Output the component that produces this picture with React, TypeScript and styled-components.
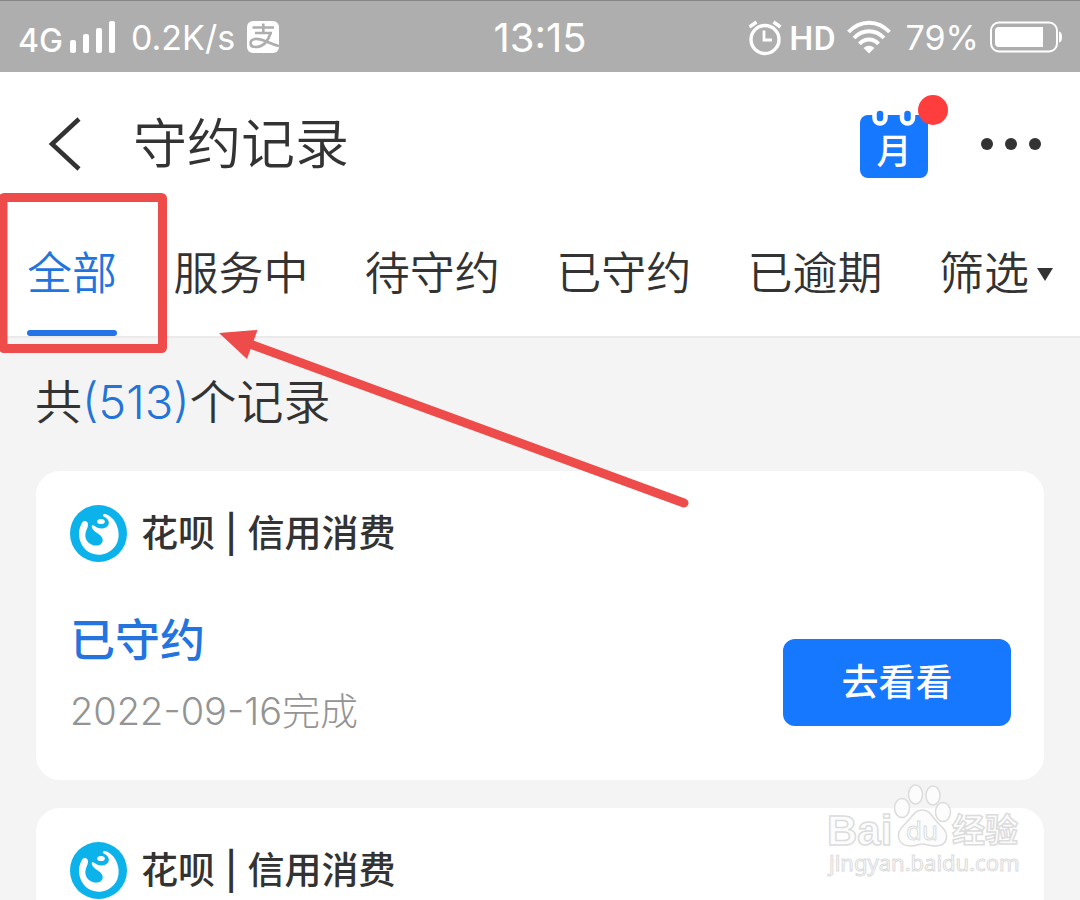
import React from "react";
import styled, { createGlobalStyle } from "styled-components";

const GlobalStyle = createGlobalStyle`
  *, *::before, *::after { box-sizing: border-box; }
  html, body { margin: 0; padding: 0; }
  body {
    background: #f4f4f4;
    color: #333;
    font-family: Inter, "Noto Sans CJK SC", sans-serif;
  }
  button { font: inherit; color: inherit; border: 0; padding: 0; background: none; cursor: pointer; }
  h1, h2, p { margin: 0; font-weight: inherit; }
  svg { display: block; flex: none; }
`;

const Screen = styled.div`
  position: relative;
  display: flex;
  flex-direction: column;
  height: 100vh;
  overflow: hidden;
`;

const StatusBar = styled.header`
  display: grid;
  grid-template-columns: 1fr auto 1fr;
  align-items: center;
  height: 72px;
  flex: none;
  padding: 2px 18px 0;
  border-top: 1px solid #858585;
  background: #aeaeae;
  color: #fff;
`;

const StatusGroup = styled.div<{ $end?: boolean }>`
  display: flex;
  align-items: center;
  justify-content: ${(p) => (p.$end ? "flex-end" : "flex-start")};
`;

const StatusText = styled.span<{ $size: number; $weight?: number; $left?: number; $right?: number }>`
  font-size: ${(p) => p.$size}px;
  font-weight: ${(p) => p.$weight ?? 400};
  line-height: 40px;
  margin-left: ${(p) => p.$left ?? 0}px;
  margin-right: ${(p) => p.$right ?? 0}px;
  white-space: nowrap;
`;

const NetworkMark = styled(StatusText)`
  padding-top: 6px;
`;

const HdMark = styled(StatusText)`
  font-family: Roboto, sans-serif;
`;

const TitleBar = styled.div`
  display: flex;
  align-items: center;
  height: 144px;
  flex: none;
  padding: 0 36px 0 48px;
  background: #fff;
`;

const IconButton = styled.button`
  display: flex;
  align-items: center;
`;

const Title = styled.h1`
  flex: 1;
  margin-left: 49px;
  padding-top: 2px;
  font-size: 54px;
  font-weight: 350;
  line-height: 80px;
`;

const Actions = styled.div`
  display: flex;
  align-items: center;
  gap: 28px;
`;

const TabBar = styled.nav`
  display: flex;
  justify-content: space-between;
  height: 122px;
  flex: none;
  padding: 0 27px;
  background: #fff;
  border-bottom: 2px solid #ebebeb;
`;

const Tab = styled.button<{ $active?: boolean }>`
  display: flex;
  flex-direction: column;
  font-size: 45px;
  font-weight: 350;
  line-height: 114px;
  color: ${(p) => (p.$active ? "#1f74e0" : "#333")};
  white-space: nowrap;

  &::after {
    content: "";
    width: 100%;
    height: 6px;
    border-radius: 3px;
    background: ${(p) => (p.$active ? "#2474e8" : "transparent")};
  }
`;

const TabLabel = styled.span`
  display: flex;
  align-items: center;
  gap: 8px;
  height: 114px;
  padding-top: 2px;
`;

const Count = styled.p`
  padding: 34px 35px 39px;
  font-size: 47px;
  font-weight: 350;
  line-height: 60px;

  em { font-style: normal; font-weight: 300; color: #2474d8; }
`;

const List = styled.main`
  flex: 1;
  min-height: 0;
  overflow: hidden;
`;

const Card = styled.article`
  margin: 0 36px 28px;
  padding: 34px 33px 44px 34px;
  border-radius: 24px;
  background: #fff;
`;

const CardHead = styled.div`
  display: flex;
  align-items: center;
  gap: 13px;
  height: 58px;
`;

const Merchant = styled.h2`
  font-size: 37px;
  font-weight: 500;
  line-height: 58px;
`;

const CardBody = styled.div`
  display: flex;
  justify-content: space-between;
  align-items: flex-end;
  margin-top: 48px;
`;

const State = styled.p`
  font-size: 45px;
  font-weight: 500;
  line-height: 60px;
  color: #2474e0;
`;

const Finished = styled.p`
  margin-top: 15px;
  font-size: 38px;
  font-weight: 300;
  line-height: 50px;
  color: #949494;
`;

const ViewButton = styled.button`
  width: 228px;
  height: 87px;
  margin-bottom: 10px;
  padding-bottom: 6px;
  border-radius: 12px;
  background: #1677ff;
  color: #fff;
  font-size: 37px;
  font-weight: 500;
`;

const Annotation = styled.svg`
  position: absolute;
  top: 0;
  left: 0;
  pointer-events: none;
`;

const Watermark = styled.svg`
  position: absolute;
  top: 780px;
  right: 52px;
  pointer-events: none;
`;

const Signal = () => (
  <svg width="46" height="34" viewBox="0 0 46 34" fill="#fff" aria-hidden="true">
    <rect x="0" y="19" width="6" height="13" rx="2" />
    <rect x="13" y="13" width="6" height="19" rx="2" />
    <rect x="26" y="7" width="6" height="25" rx="2" />
    <rect x="39" y="0" width="6" height="32" rx="2" />
  </svg>
);

const PayLogo = () => (
  <svg width="32" height="34" viewBox="0 0 32 34" fill="none" aria-hidden="true">
    <rect width="32" height="32" rx="6" fill="#fff" />
    <g stroke="#aeaeae" strokeWidth="2.600">
      <path d="M5.500 6.500H27M16.300 2.500V12M8 12H25" />
      <path d="M23.500 12C21.500 18.500 17 26 8.500 26C2 26 2 19 8 18C14.500 17 22 22.500 32 25" />
    </g>
  </svg>
);

const Alarm = () => (
  <svg width="34" height="36" viewBox="0 0 34 36" fill="none" stroke="#fff" strokeWidth="3.400" aria-hidden="true">
    <circle cx="17" cy="19.500" r="14" />
    <path d="M16 10.500V20H24" strokeWidth="2.800" />
    <path d="M1.500 7L8.500 2M25.500 2L32.500 7" />
  </svg>
);

const Wifi = () => (
  <svg width="44" height="36" viewBox="0 0 44 36" fill="none" stroke="#fff" aria-hidden="true">
    <path d="M1.500 12C13 -0.500 31 -0.500 42.500 12" strokeWidth="4" />
    <path d="M7 18C15.500 9 28.500 9 37 18" strokeWidth="4" />
    <path d="M12.500 23.800C18 18 26 18 31.500 23.800" strokeWidth="4" />
    <path d="M22 33.500L16.500 28Q22 23.500 27.500 28Z" fill="#fff" stroke="none" />
  </svg>
);

const Battery = () => (
  <svg width="72" height="34" viewBox="0 0 72 34" fill="none" aria-hidden="true">
    <rect x="1" y="1.500" width="66" height="29" rx="8" stroke="#fff" strokeWidth="2" />
    <path d="M9 6H53V26H9Q5 26 5 22V10Q5 6 9 6Z" fill="#fff" />
    <path d="M69 10.500Q72 11 72 16T69 21.500Z" fill="#fff" />
  </svg>
);

const Calendar = () => (
  <svg width="90" height="102" viewBox="0 0 90 102" aria-hidden="true">
    <rect x="2" y="22" width="68" height="63" rx="8" fill="#1677ff" />
    <g fill="#1677ff" stroke="#fff" strokeWidth="4.500">
      <rect x="16.500" y="15.500" width="11" height="15" rx="5.500" />
      <rect x="44" y="15.500" width="11" height="15" rx="5.500" />
    </g>
    <text x="36" y="71" textAnchor="middle" fontSize="35" fontWeight="500" fill="#fff" fontFamily="'Noto Sans CJK SC', sans-serif">月</text>
    <circle cx="75" cy="17" r="15" fill="#ff3d3d" />
  </svg>
);

const Huabei = () => (
  <svg width="58" height="58" viewBox="0 0 58 58" aria-hidden="true">
    <circle cx="28.500" cy="28.500" r="28.500" fill="#0cb2ea" />
    <path
      d="M12.500 17C8.500 23 7.500 32 12 40C17 49 28 52 37 48C48 43 51 31 47 21C45 15 40 10 35 9C32.500 9 32 11 34.500 12C38.500 14 40 17.500 38 20.500C35.500 24 31 24 27 22.500C25 21.500 23 19.500 22 20.500C21 22 23 25.500 27 28C32.500 31 34.500 35.500 31 39C26.500 42.500 18.500 40 16 34C14.500 29.500 16 26 17.500 22.500C18.500 19.500 18 17 16 16.300C14.500 15.800 13.200 16 12.500 17Z"
      fill="#fff"
    />
    <ellipse cx="31" cy="16.500" rx="3.800" ry="2.600" fill="#fff" />
  </svg>
);

const tabs = ["全部", "服务中", "待守约", "已守约", "已逾期"];
const records = [
  { id: 1, merchant: "花呗 | 信用消费", state: "已守约", finished: "2022-09-16完成" },
  { id: 2, merchant: "花呗 | 信用消费", state: "已守约", finished: "2022-09-16完成" },
];

export default function App() {
  return (
    <>
      <GlobalStyle />
      <Screen>
        <StatusBar>
          <StatusGroup>
            <NetworkMark $size={32} $weight={500} $right={7}>4G</NetworkMark>
            <Signal />
            <StatusText $size={34} $left={15} $right={12}>0.2K/s</StatusText>
            <PayLogo />
          </StatusGroup>
          <StatusText $size={40}>13:15</StatusText>
          <StatusGroup $end>
            <Alarm />
            <HdMark $size={34} $weight={500} $left={7} $right={11}>HD</HdMark>
            <Wifi />
            <StatusText $size={34} $left={15} $right={11}>79%</StatusText>
            <Battery />
          </StatusGroup>
        </StatusBar>

        <TitleBar>
          <IconButton aria-label="返回">
            <svg width="36" height="54" viewBox="0 0 36 54" fill="none" stroke="#333" strokeWidth="4.500">
              <path d="M31 2L4 27L31 52" />
            </svg>
          </IconButton>
          <Title>守约记录</Title>
          <Actions>
            <IconButton aria-label="日历">
              <Calendar />
            </IconButton>
            <IconButton aria-label="更多">
              <svg width="68" height="16" viewBox="0 0 68 16" fill="#333">
                <circle cx="11" cy="8" r="6" />
                <circle cx="35" cy="8" r="6" />
                <circle cx="59" cy="8" r="6" />
              </svg>
            </IconButton>
          </Actions>
        </TitleBar>

        <TabBar>
          {tabs.map((name, i) => (
            <Tab key={name} $active={i === 0}>
              <TabLabel>{name}</TabLabel>
            </Tab>
          ))}
          <Tab>
            <TabLabel>
              筛选
              <svg width="16" height="13" viewBox="0 0 16 13" fill="#333" aria-hidden="true">
                <path d="M0 0H16L8 13Z" />
              </svg>
            </TabLabel>
          </Tab>
        </TabBar>

        <List>
          <Count>
            共<em>(513)</em>个记录
          </Count>
          {records.map((r) => (
            <Card key={r.id}>
              <CardHead>
                <Huabei />
                <Merchant>{r.merchant}</Merchant>
              </CardHead>
              <CardBody>
                <div>
                  <State>{r.state}</State>
                  <Finished>{r.finished}</Finished>
                </div>
                <ViewButton>去看看</ViewButton>
              </CardBody>
            </Card>
          ))}
        </List>

        <Annotation width="700" height="520" viewBox="0 0 700 520" fill="none" aria-hidden="true">
          <rect x="3" y="197.500" width="159.500" height="151" rx="1" stroke="#ee4b4b" strokeWidth="9" strokeLinejoin="round" />
          <path d="M250 344L684 503" stroke="#ee4b4b" strokeWidth="9" strokeLinecap="round" />
          <path d="M219 333L257.500 330L247 359Z" fill="#ee4b4b" />
        </Annotation>

        <Watermark width="204" height="104" viewBox="0 0 204 104" fill="#fcfcfc" stroke="#dcdcdc" strokeWidth="1.500" aria-hidden="true">
          <text x="3" y="65" fontSize="42" fontWeight="700" fontFamily="'Liberation Sans', sans-serif">Bai</text>
          <ellipse cx="78" cy="28" rx="7.500" ry="9.500" />
          <ellipse cx="91.500" cy="14.500" rx="7" ry="9.500" />
          <ellipse cx="109" cy="15.500" rx="7" ry="9.500" />
          <ellipse cx="119" cy="32" rx="7.500" ry="9.500" />
          <path d="M98 30C90 30 88 38 80 45C70 54 74 66 87 66C94 66 94 64 98 64C102 64 106 66 111 66C124 66 126 54 117 46C108 38 107 30 98 30Z" />
          <text x="98" y="60" textAnchor="middle" fontSize="26" strokeWidth="1" fontFamily="'Noto Sans', sans-serif">du</text>
          <text x="128" y="62" fontSize="33" fontWeight="700" fontFamily="'Noto Sans CJK SC', sans-serif">经验</text>
          <text x="5" y="91" fontSize="22" strokeWidth="1" fontFamily="'Noto Sans', sans-serif">jingyan.baidu.com</text>
        </Watermark>
      </Screen>
    </>
  );
}
